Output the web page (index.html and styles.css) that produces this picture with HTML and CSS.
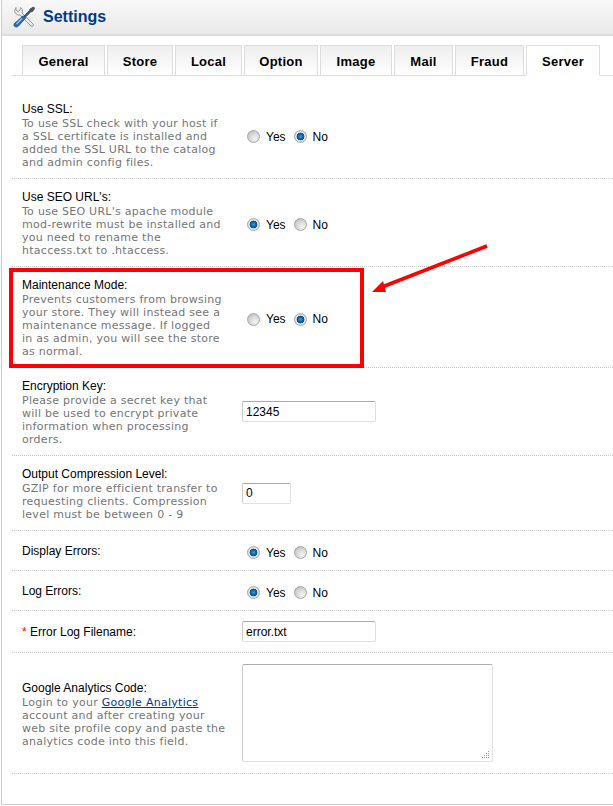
FILE: index.html
```html
<!DOCTYPE html>
<html lang="en">
<head>
<meta charset="utf-8">
<title>Settings</title>
<link rel="stylesheet" href="styles.css">
</head>
<body>
<div class="box">
  <div class="heading">
    <svg class="heading-icon" width="22" height="22" viewBox="0 0 22 22" aria-hidden="true">
      <path d="M3 1.5 L3 4 L5 5.5 L7 4 L7.5 1.5 C9.5 2.5 10 5 9 7 L20 18 C21 20 19.5 21 18 20 L7 9 C4.5 9.5 2 8 1.5 5 Z" fill="#eeeeee" stroke="#8d8d8d" stroke-width="0.9"/>
      <path d="M20.5 1 L21.8 2.3 L19.5 5.5 L18 5.7 L12 11.5 L10.8 10.3 L16.6 4.3 L17 3 Z" fill="#4a5560" stroke="#39424a" stroke-width="0.8"/>
      <path d="M10.3 9.8 L12.6 12.1 L5.5 20 C4 21.6 1.6 21.2 1 19.6 C0.8 18.6 1.2 17.6 2 17 Z" fill="#2f6fb0" stroke="#1b4c80" stroke-width="0.8"/>
      <path d="M9 12.5 L3.5 18" stroke="#9cc6ea" stroke-width="1.2" fill="none"/>
    </svg>
    <h1 class="title">Settings</h1>
  </div>
  <div class="content">
    <div class="tabs">
      <a class="tab t-general">General</a>
      <a class="tab t-store">Store</a>
      <a class="tab t-local">Local</a>
      <a class="tab t-option">Option</a>
      <a class="tab t-image">Image</a>
      <a class="tab t-mail">Mail</a>
      <a class="tab t-fraud">Fraud</a>
      <a class="tab t-server active">Server</a>
    </div>
    <div class="form">
      <div class="row">
        <div class="label">Use SSL:<span class="help">To use SSL check with your host if<br>a SSL certificate is installed and<br>added the SSL URL to the catalog<br>and admin config files.</span></div>
        <div class="field radios"><input type="radio" name="ssl"><label>Yes</label><input type="radio" name="ssl" checked><label>No</label></div>
      </div>
      <div class="row">
        <div class="label">Use SEO URL's:<span class="help">To use SEO URL's apache module<br>mod-rewrite must be installed and<br>you need to rename the<br>htaccess.txt to .htaccess.</span></div>
        <div class="field radios"><input type="radio" name="seo" checked><label>Yes</label><input type="radio" name="seo"><label>No</label></div>
      </div>
      <div class="row">
        <div class="label">Maintenance Mode:<span class="help">Prevents customers from browsing<br>your store. They will instead see a<br>maintenance message. If logged<br>in as admin, you will see the store<br>as normal.</span></div>
        <div class="field radios"><input type="radio" name="mnt"><label>Yes</label><input type="radio" name="mnt" checked><label>No</label></div>
      </div>
      <div class="row">
        <div class="label">Encryption Key:<span class="help">Please provide a secret key that<br>will be used to encrypt private<br>information when processing<br>orders.</span></div>
        <div class="field"><input class="text wide" type="text" value="12345"></div>
      </div>
      <div class="row">
        <div class="label">Output Compression Level:<span class="help">GZIP for more efficient transfer to<br>requesting clients. Compression<br>level must be between 0 - 9</span></div>
        <div class="field"><input class="text narrow" type="text" value="0"></div>
      </div>
      <div class="row">
        <div class="label">Display Errors:</div>
        <div class="field radios"><input type="radio" name="de" checked><label>Yes</label><input type="radio" name="de"><label>No</label></div>
      </div>
      <div class="row">
        <div class="label">Log Errors:</div>
        <div class="field radios"><input type="radio" name="le" checked><label>Yes</label><input type="radio" name="le"><label>No</label></div>
      </div>
      <div class="row">
        <div class="label"><span class="req">*</span> Error Log Filename:</div>
        <div class="field"><input class="text wide" type="text" value="error.txt"></div>
      </div>
      <div class="row">
        <div class="label">Google Analytics Code:<span class="help">Login to your <a class="link">Google Analytics</a><br>account and after creating your<br>web site profile copy and paste the<br>analytics code into this field.</span></div>
        <div class="field area-field">
          <div class="area-wrap">
            <textarea class="area"></textarea>
            <svg class="grip" width="8" height="8" viewBox="0 0 8 8" aria-hidden="true">
              <path d="M6 0h1v1H6zM4 2h1v1H4zM6 2h1v1H6zM2 4h1v1H2zM4 4h1v1H4zM6 4h1v1H6zM0 6h1v1H0zM2 6h1v1H2zM4 6h1v1H4zM6 6h1v1H6z" fill="#9a9a9a"/>
            </svg>
          </div>
        </div>
      </div>
    </div>
  </div>
</div>
<div class="highlight"></div>
<svg class="arrow" width="130" height="60" viewBox="0 0 130 60" aria-hidden="true">
  <path d="M119 3 L14 44" stroke="#ff0000" stroke-width="3.6" fill="none"/>
  <path d="M4 49 L15 38 L18 49 Z" fill="#ff0000"/>
</svg>
</body>
</html>
```
FILE: styles.css
```css
html, body { margin: 0; padding: 0; height: 806px; overflow: hidden; background: #fff; }
body { position: relative; font-family: "Liberation Sans", Arial, sans-serif; font-size: 12px; color: #000; }
.box { width: 640px; height: 805px; box-sizing: border-box; margin-left: 1px; border-left: 1px solid #ccc; border-bottom: 1px solid #ccc; }
.heading { height: 34px; display: flex; align-items: center; border-bottom: 2px solid #ddd; background: linear-gradient(#f8f8f8, #e9e9e9); padding-left: 11px; }
.heading-icon { flex: none; margin-right: 8px; }
.title { margin: 0; font-size: 16px; font-weight: bold; color: #003a88; }
.content { padding: 9px 0 0 10px; }
.tabs { display: flex; height: 30px; border-bottom: 1px solid #ddd; padding-left: 10px; width: 620px; box-sizing: content-box; }
.tab { box-sizing: border-box; height: 31px; padding-top: 1px; border: 1px solid #ddd; background: linear-gradient(#eee, #fff); font-size: 13px; letter-spacing: 0.25px; font-weight: bold; display: flex; justify-content: center; align-items: center; margin-right: 2px; }
.tab.active { background: #fff; border-bottom-color: #fff; }
.t-general { width: 83px; } .t-store { width: 66px; } .t-local { width: 67px; } .t-option { width: 74px; }
.t-image { width: 72px; } .t-mail { width: 59px; } .t-fraud { width: 69px; } .t-server { width: 74px; }
.form { margin-top: 15px; }
.row { display: grid; grid-template-columns: 230px 1fr; align-items: center; min-height: 39px; border-bottom: 1px dotted #ccc; }
.label { padding: 11px 0 9px 10px; line-height: 15px; }
.help { display: block; font-family: "DejaVu Sans", Verdana, sans-serif; font-size: 11px; letter-spacing: 0.27px; line-height: 13px; color: #757575; }
.field { padding: 10px 0; display: flex; align-items: center; }
.radios { font-size: 12px; height: 19px; padding: 12px 0 8px 5px; }
.radios input { appearance: none; -webkit-appearance: none; width: 13px; height: 13px; margin: 0 6px 0 0; border-radius: 50%; border: 1px solid #a8a8a8; box-sizing: border-box; background: radial-gradient(circle at 65% 70%, #f4f4f4 0, #e0e0e0 35%, #b4b4b4 100%); }
.radios input:checked { background: radial-gradient(circle at 50% 50%, #3a9ad6 0, #0a5f9c 35%, #0a4f88 46%, #e8e8e8 54%, #c4c4c4 100%); }
.radios label { margin-right: 8px; }
.text { box-sizing: border-box; height: 21px; border: 1px solid #e0e0e4; border-top-color: #aaa; border-left-color: #ccc; padding: 1px 2px 1px 3px; font: 12px "Liberation Sans", Arial, sans-serif; border-radius: 2px; }
.wide { width: 134px; }
.narrow { width: 49px; }
.area-field { padding: 11px 0; }
.area-wrap { position: relative; width: 251px; height: 98px; }
.area { box-sizing: border-box; display: block; width: 251px; height: 98px; border: 1px solid #e0e0e4; border-top-color: #aaa; border-left-color: #ccc; border-radius: 2px; resize: none; }
.grip { position: absolute; right: 3px; bottom: 3px; }
.req { color: #f00; }
.link { color: #003a88; text-decoration: underline; }
.highlight { position: absolute; left: 9px; top: 268px; width: 347px; height: 92px; border: 4px solid #f00; }
.arrow { position: absolute; left: 368px; top: 243px; }
```
